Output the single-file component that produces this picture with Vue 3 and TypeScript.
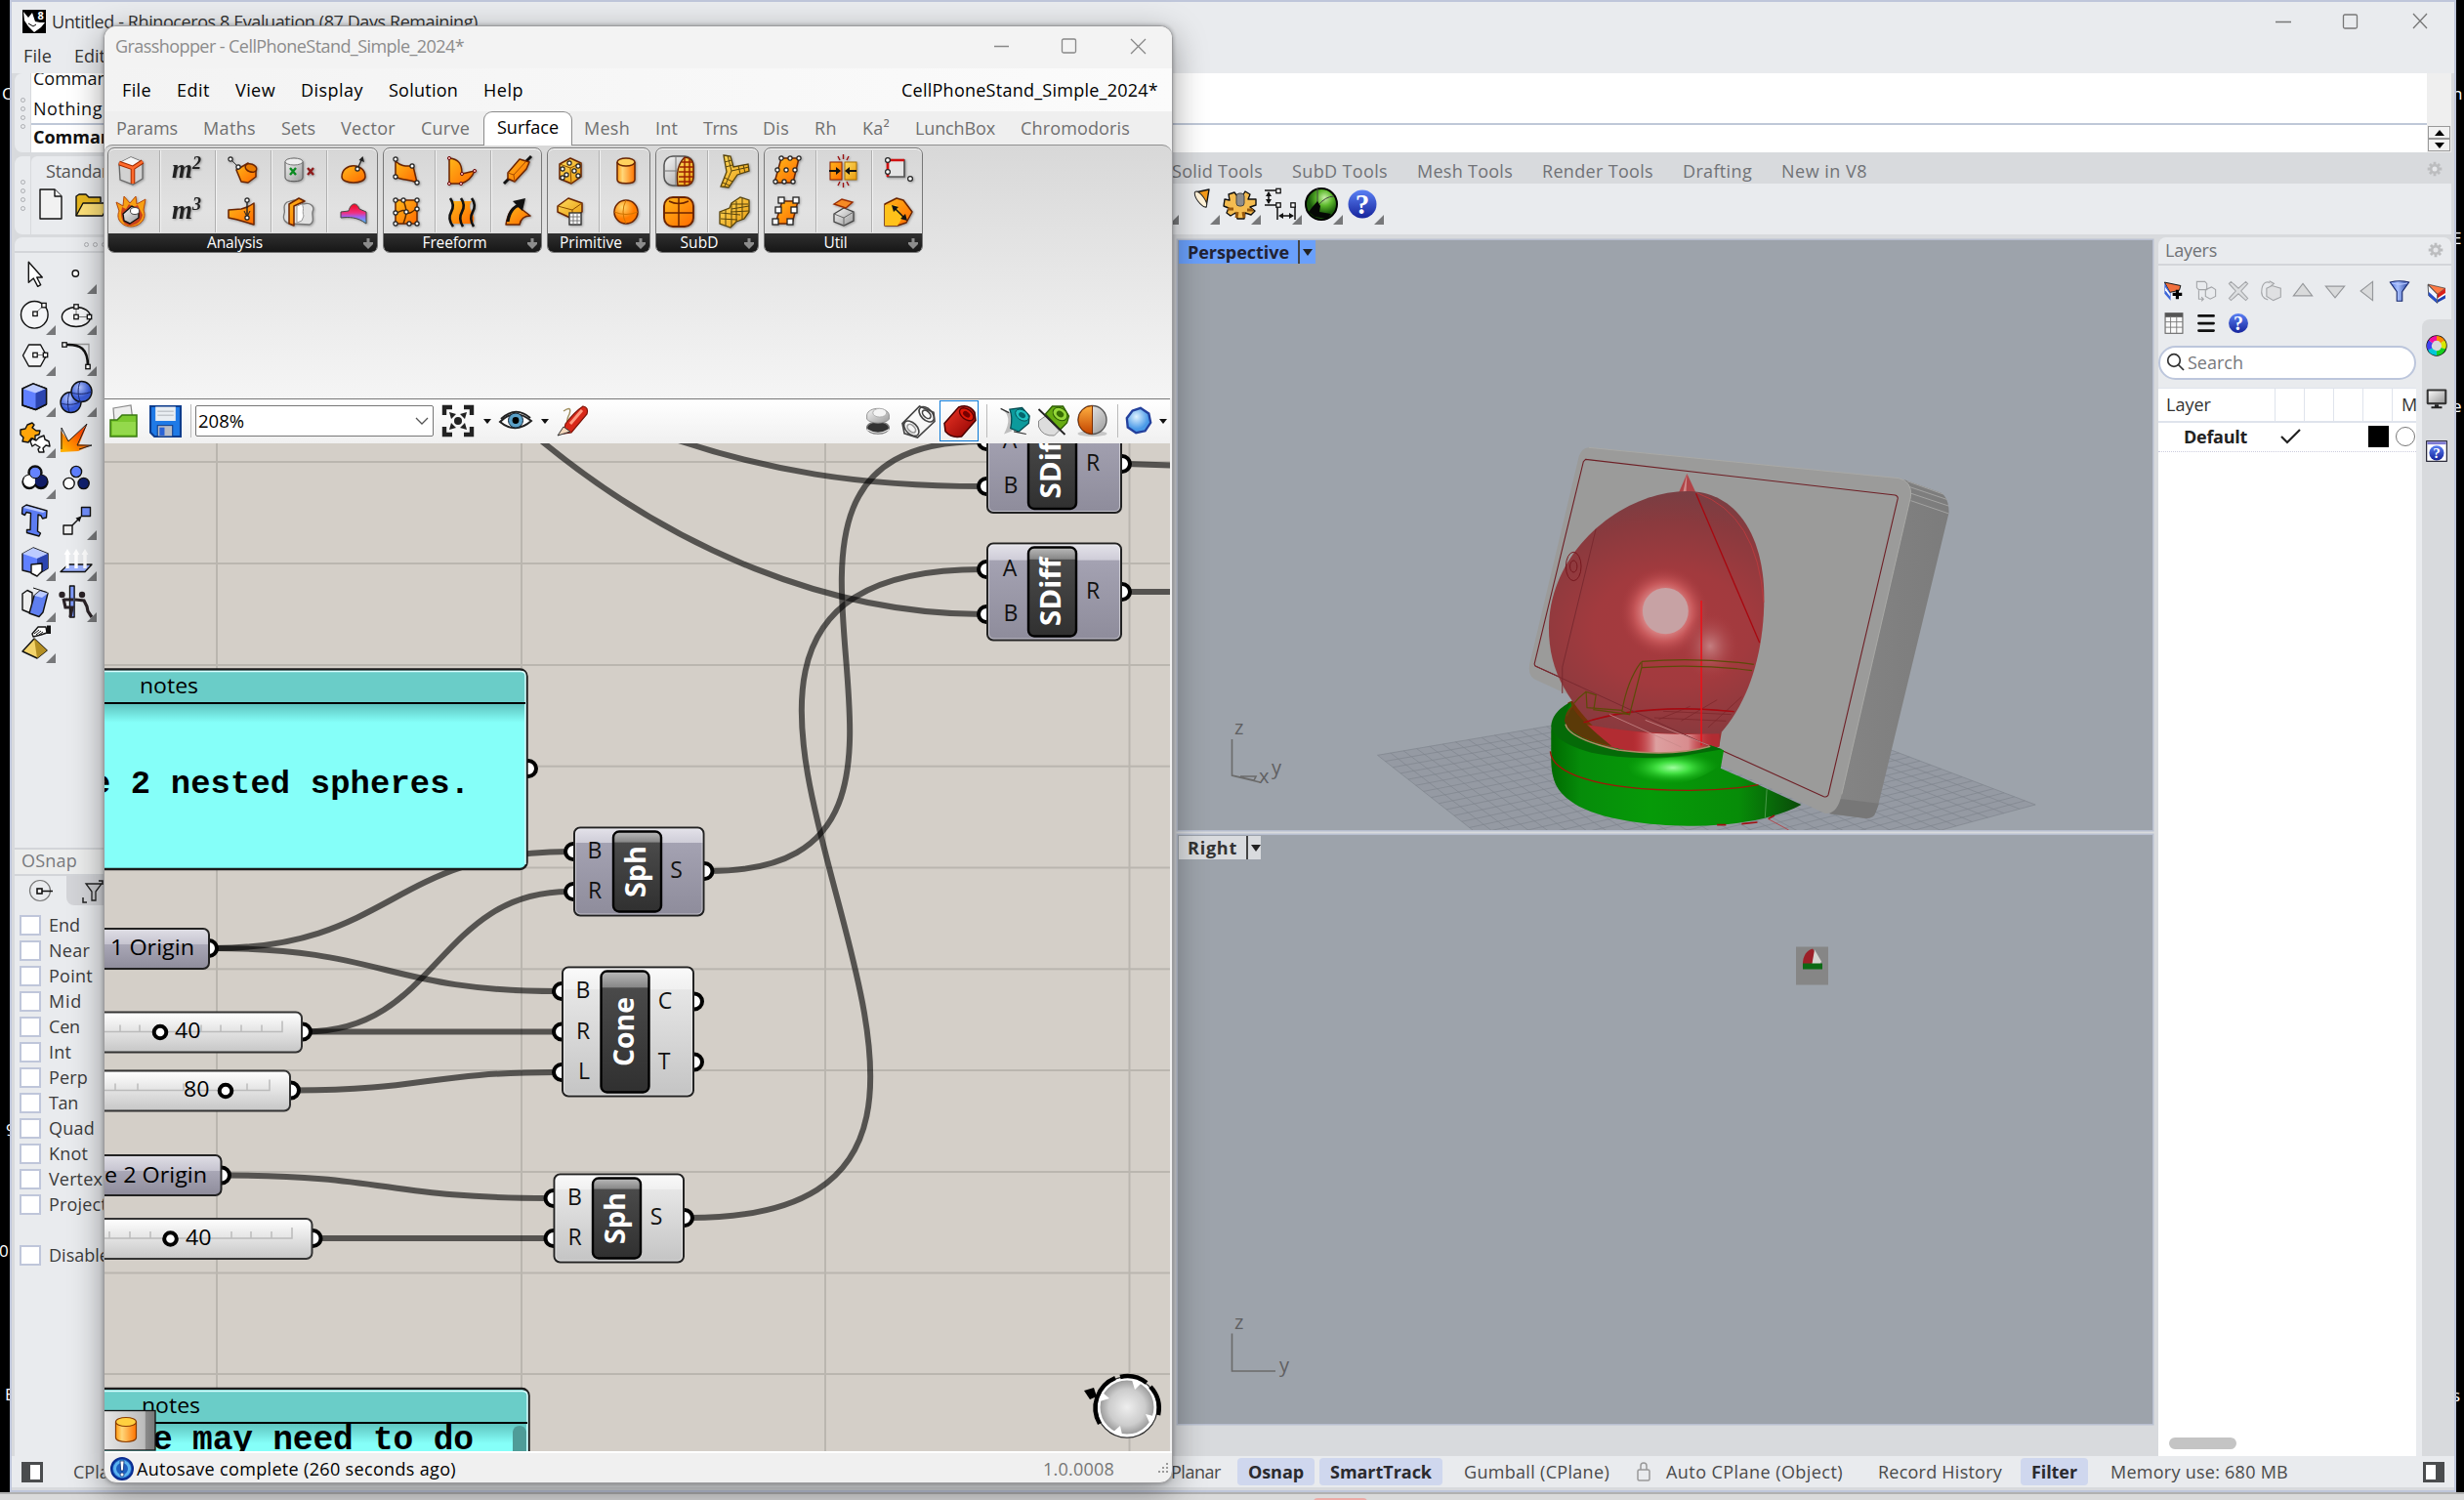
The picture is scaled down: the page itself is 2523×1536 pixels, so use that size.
<script setup lang="ts">
import type { Directive } from 'vue'

/* Sets tracking so that a label occupies exactly the given number of pixels. */
const vFit: Directive<HTMLElement, number> = {
  mounted(el, binding) {
    const range = document.createRange()
    range.selectNodeContents(el)
    const natural = range.getBoundingClientRect().width
    const count = Math.max((el.textContent ?? '').trim().length, 1)
    el.style.letterSpacing = `${(binding.value - natural) / count}px`
    el.style.width = `${binding.value}px`
  },
}

type Label = [text: string, width: number]

const menu: Label[] = [['File', 30], ['Edit', 34], ['View', 41], ['Display', 64], ['Solution', 71], ['Help', 41]]
const tabs: Label[] = [
  ['Params', 63], ['Maths', 54], ['Sets', 35], ['Vector', 56], ['Curve', 50], ['Surface', 63], ['Mesh', 47],
  ['Int', 23], ['Trns', 35], ['Dis', 27], ['Rh', 23], ['Ka²', 28], ['LunchBox', 82], ['Chromodoris', 112],
]
const rhinoTabs: Label[] = [
  ['Solid Tools', 93], ['SubD Tools', 98], ['Mesh Tools', 98], ['Render Tools', 114], ['Drafting', 71], ['New in V8', 88],
]
const snaps: Label[] = [
  ['End', 32], ['Near', 42], ['Point', 45], ['Mid', 34], ['Cen', 32], ['Int', 23], ['Perp', 40], ['Tan', 30],
  ['Quad', 47], ['Knot', 40], ['Vertex', 55], ['Project', 60],
]

interface StatusItem { text: string; width: number; gap: number; on?: boolean }
const status: StatusItem[] = [
  { text: 'Osnap', width: 57, gap: 17, on: true },
  { text: 'SmartTrack', width: 104, gap: 5, on: true },
  { text: 'Gumball (CPlane)', width: 149, gap: 22 },
  { text: 'lock', width: 14, gap: 28 },
  { text: 'Auto CPlane (Object)', width: 181, gap: 16 },
  { text: 'Record History', width: 127, gap: 36 },
  { text: 'Filter', width: 47, gap: 19, on: true },
  { text: 'Memory use: 680 MB', width: 182, gap: 23 },
]

const K = 'stroke="#111" stroke-width="1.4" stroke-linejoin="round"'
const O = 'stroke="#6b2400" stroke-width="1.5" stroke-linejoin="round"'
const sq = (x: number, y: number) => `<rect x="${x - 2.2}" y="${y - 2.2}" width="4.4" height="4.4" fill="#fff" stroke="#111" stroke-width="1.3"/>`
const dot = (x: number, y: number, r = 2.1) => `<circle cx="${x}" cy="${y}" r="${r}" fill="#fff" stroke="#222" stroke-width="1.2"/>`
const HELP = '<circle cx="16" cy="16" r="14.5" fill="url(#helpblue)"/><text x="16" y="26" font-family="Liberation Serif, serif" font-weight="700" font-size="29" fill="#fff" text-anchor="middle">?</text>'

/* Rhino side toolbar, two columns, 32 unit boxes */
const tools: { art: string; fly: boolean }[] = [
  { fly: false, art: `<path d="M9.3 4.3V25.3L14.3 21L18.7 29.3L21.7 27.7L17.7 20H23.3Z" fill="#fff" ${K}/>` },
  { fly: true, art: `<circle cx="15.3" cy="16" r="3.2" fill="#fff" ${K}/>` },
  { fly: true, art: `<circle cx="15.3" cy="16.3" r="13.8" fill="#f4f5f7" ${K}/><path d="M16 15L25 6.5" stroke="#777"/>${sq(16, 15.3)}${sq(25, 6.6)}` },
  { fly: true, art: `<ellipse cx="16" cy="18.5" rx="14.6" ry="10" fill="#f4f5f7" ${K}/><path d="M16 8V18.5H29" stroke="#777" fill="none"/>${sq(16, 8)}${sq(16, 18.5)}${sq(29.5, 18.5)}` },
  { fly: true, art: `<path d="M9.5 5H21.5L27.5 16L21.5 27H9.5L3.5 16Z" fill="#f4f5f7" ${K}/><path d="M16 15.5H27" stroke="#777"/>${sq(16, 15.5)}${sq(26.5, 15.5)}` },
  { fly: true, art: `<path d="M5 4.5H29V27" fill="none" stroke="#999" stroke-width="1.3"/><path d="M6 5C20 4.5 28 9 28 27" fill="none" stroke="#111" stroke-width="2.6"/>${sq(4, 5)}${sq(28, 27.5)}` },
  { fly: true, art: `<path d="M3 8L14 2.8L27.5 8V24L16.5 29.5L3 25Z" fill="#6080ff" ${K}/><path d="M3 8L14 2.8L27.5 8L16.5 12.5Z" fill="#bccbff"/><path d="M16.5 12.5L27.5 8V24L16.5 29.5Z" fill="#2c45b0"/><path d="M3 8L14 2.8L27.5 8V24L16.5 29.5L3 25Z" fill="none" ${K}/>` },
  { fly: true, art: `<circle cx="10.5" cy="22" r="10.5" fill="url(#ballblue)" ${K}/><circle cx="21.5" cy="11" r="10.5" fill="url(#ballblue)" ${K}/><path d="M11.5 12C16 14 26 14 31.5 11M20 1C17 8 18 16 20 21M0.5 23C6 25 15 25 21 21M9 12C7 18 7 27 9 32" fill="none" stroke="#1c2a70"/>` },
  { fly: true, art: `<path d="M1 8L6 7L8 3L13 1L15 3L13 6L17 9L21 9L20 13L16 14L16 18L12 17L9 21L3 20L4 16L1 13Z" fill="#ffa50a" ${K}/><path d="M13 17L17 19L20 16L25 14L26 18L30 20L31 25L27 24L24 27L25 31L20 31L19 28L21 26L16 23L13 25L11 20Z" fill="#fff" ${K}/>` },
  { fly: false, art: `<path d="M0 31V9L8 19L27 3L19 23L31 24L18 30Z" fill="url(#boom)"/><path d="M1 28V6L8 20L27 2L17 24L32 24L19 28" fill="none" stroke="#222"/>` },
  { fly: true, art: `<g ${K} stroke-width="6"><circle cx="16" cy="10" r="7"/><circle cx="10" cy="19.5" r="7"/><circle cx="22" cy="19.5" r="7"/></g><circle cx="10.2" cy="18.6" r="6.2" fill="#fff"/><circle cx="22" cy="18.6" r="6.2" fill="#101c66"/><circle cx="16" cy="10" r="5.8" fill="#6583ff" stroke="#111"/>` },
  { fly: false, art: `<g ${K}><circle cx="16" cy="9" r="5.6" fill="#5f80ff"/><circle cx="8.6" cy="21" r="5.6" fill="#fff"/><circle cx="23.6" cy="21" r="5.6" fill="#10206e"/></g>` },
  { fly: false, art: `<path d="M3 3.5L7 1L28 7L27.5 14L23.5 15L22 12L19 11L18.5 28L21.5 30L20 33L7.5 29.5V26.5L11 26.5L11.5 9.5L7 8.5L5.500 11.500L2.500 10Z" fill="#5c7cf2" ${K}/><path d="M4 4L7 2L27 7.500L24 9Z" fill="#b9c8ff"/>` },
  { fly: true, art: `<path d="M12 22L21 13" stroke="#111" stroke-width="1.5"/><path d="M21.500 12.500L15.500 14.500L19.500 18.500Z" fill="#111"/><rect x="3" y="22" width="9" height="9" fill="#eee" ${K}/><rect x="21.500" y="3.500" width="9" height="9" fill="#7290ff" ${K}/>` },
  { fly: true, art: `<path d="M3 9L14 3L29 9L29 24L19 30L3 26Z" fill="#6080ff" ${K}/><path d="M3 9L14 3L29 9L18 14Z" fill="#bccbff"/><path d="M18 14L29 9V24L18 30Z" fill="#2c45b0"/><path d="M12 20L23 19V27L18 32L12 29Z" fill="#fff" ${K}/>` },
  { fly: true, art: `<path d="M0 27.500L8 20H32L25 27.500Z" fill="#9db2ff" ${K} stroke-width="2"/><path d="M7 24V8M16 24V8M25 24V8" stroke="#fff" stroke-width="3.400"/><path d="M3.500 10L7 4L10.500 10ZM12.500 10L16 4L19.500 10ZM21.500 10L25 4L28.500 10Z" fill="#fff"/>` },
  { fly: true, art: `<path d="M3 8L8 4.500L13 7V27L9 27L3 24.500Z" fill="#eee" ${K}/><path d="M14 2L28 6.500" stroke="#111"/><path d="M15 10L21 5L29 7.500L24 27L20 31.500L10 28Z" fill="#5f7ff0" ${K}/><path d="M15 10L21 5L29 7.500L23 12Z" fill="#bccbff"/>` },
  { fly: true, art: `<rect x="9.500" y="0" width="4.600" height="32" fill="#7f9bff" ${K}/><g fill="none" stroke="#2a2226" stroke-width="3.200"><path d="M3 13L5 22L12 22L10 32M3 14H13M15 14L24 15L27 21L28 26L32 32"/></g><circle cx="1.500" cy="9" r="3.200" fill="#2a2226"/><circle cx="22" cy="9" r="3.200" fill="#2a2226"/>` },
  { fly: true, art: `<path d="M13 7L19 0L27 0L28 6L22 8L14 10Z" fill="#fff" ${K}/><path d="M15 7L20 3M17 8L22 4M20 8L24 5" stroke="#111"/><path d="M28 -1.500H32V7H28Z" fill="#111"/><path d="M3 25L15 12L28 24L18 32Z" fill="#f3d36a" ${K}/><path d="M15 12L18 32L28 24Z" fill="#b48f24"/>` },
]

/* Component palette, 28 unit boxes, ordered row by row */
const cyl = (a: string, b: string, t = '') => `<g ${t}><path d="M5 5V23C5 28 23 28 23 23V5" fill="${a}" ${O}/><ellipse cx="14" cy="5" rx="9" ry="4" fill="${b}" ${O}/></g>`
const groups: { name: string; width: number; label: number; icons: string[] }[] = [
  { name: 'Analysis', width: 277, label: 57, icons: [
    `<path d="M2 6L14 0L26 5V22L16 28L3 23Z" fill="#d2d2d2" stroke="#666" stroke-width="1.300"/><path d="M2 6L14 0L26 5L16 11Z" fill="#f6f6f6"/><path d="M2 6L16 11L26 4.500M16 11V27" fill="none" stroke="#a22c00" stroke-width="4.600"/><path d="M2 6L16 11L26 4.500M16 11V27" fill="none" stroke="#ff6a2c" stroke-width="2.600"/>`,
    `<text x="-1" y="21" font-family="Liberation Serif, serif" font-style="italic" font-weight="700" font-size="27" fill="#222">m</text><text x="20" y="12" font-family="Liberation Serif, serif" font-style="italic" font-weight="700" font-size="18" fill="#222">2</text>`,
    `<path d="M8 13L20 6L28 12V20L20 26L13 25Z" fill="url(#or)" ${O}/><ellipse cx="23" cy="11" rx="6" ry="4" fill="#e87a00" ${O} transform="rotate(20 23 11)"/><path d="M3 3L10 10" stroke="#333"/>${dot(2, 2)}${dot(10, 10)}`,
    `<path d="M1 5V21C1 26 19 26 19 21V5C19 0 1 0 1 5Z" fill="url(#gr)" stroke="#555"/><ellipse cx="10" cy="4.500" rx="9" ry="3.500" fill="#eee" stroke="#777"/><path d="M6 11L12 18M12 11L6 18" stroke="#0a8a20" stroke-width="2.400"/><path d="M24 11L30 18M30 11L24 18" stroke="#8e1a1a" stroke-width="2.400"/>`,
    `<path d="M2 20C2 5 26 5 26 20C26 28 2 28 2 20Z" fill="url(#or)" ${O}/><path d="M18 12L23 1" stroke="#222" stroke-width="1.300"/><path d="M23.500-1L25 5L19.500 3Z" fill="#222"/>${dot(18, 12)}`,
    `<path d="M2 13L-1 4L6 8L7-2L13 5L19-2L20 6L29 1L27 12C31 22 22 29 14 29S-2 22 2 13Z" fill="#f7a014" stroke="#b8480a"/><path d="M4 15L5 9L9 11L12 6L16 9L21 7L23 11L26 17C25 24 20 27 14 28S4 23 4 15Z" fill="#c8401c"/><path d="M6 16L15 8L22 12L22 20L13 26L7 23Z" fill="url(#gr)" ${K}/><ellipse cx="18" cy="13" rx="4.500" ry="3.500" fill="#fff" stroke="#444"/>`,
    `<text x="-1" y="21" font-family="Liberation Serif, serif" font-style="italic" font-weight="700" font-size="27" fill="#222">m</text><text x="20" y="12" font-family="Liberation Serif, serif" font-style="italic" font-weight="700" font-size="18" fill="#222">3</text>`,
    `<path d="M0 12L13 11C18 10 22 8 26 5V27C18 25 12 22 0 20Z" fill="url(#or)" ${O}/><path d="M19 1V20" stroke="#222" stroke-width="1.400"/><path d="M16 13L19 19L22 13" fill="none" stroke="#222"/>${dot(19, 2)}${dot(19, 20)}`,
    `<path d="M3 4C-3 8 2 12 0 16C-2 22 2 26 7 26L26 27C32 24 28 18 29 14C32 8 26 4 20 6L10 2Z" fill="#e2e2e2" stroke="#777" stroke-width="1.300"/><path d="M5 6L15 0L21 3L10 8V28L5 26Z" fill="url(#or)" ${O}/><path d="M13 8L18 6C21 10 18 14 20 18L18 23L13 25Z" fill="#fff" stroke="#999"/>`,
    `<path d="M1 14L9 13C11 5 17 3 20 11L27 14V26C18 19 9 19 1 20Z" fill="url(#heat)" stroke="#444"/>`,
  ] },
  { name: 'Freeform', width: 163, label: 66, icons: [
    `<path d="M3 4C9 10 14 9 21 9L25 26C16 22 10 24 3 20Z" fill="url(#or)" ${O}/>${dot(3, 2)}${dot(20, 9)}${dot(3, 20)}${dot(25, 26)}`,
    `<path d="M1 1C11 2 14 7 14 17L27 14Q23 24 13 27H1Z" fill="url(#or)" ${O}/><g fill="#f7b0b0" stroke="#6b1010"><circle cx="1" cy="1" r="1.600"/><circle cx="27" cy="14" r="1.600"/><circle cx="14" cy="17" r="1.600"/><circle cx="1" cy="27" r="1.600"/><circle cx="13" cy="27" r="1.600"/></g>`,
    `<path d="M0 27L28-1" stroke="#111" stroke-width="3"/><path d="M4 16L16 2L26 5L23 12L11 25L4 22Z" fill="url(#or)" ${O}/><path d="M4 16L10 18L11 25M10 18L22 5" fill="none" stroke="#a84a00"/>`,
    `<rect x="3" y="2" width="22" height="24" fill="url(#or)" ${O}/><path d="M3 16Q12 10 14 14T25 10M11 2Q14 10 14 14T11 26" fill="none" stroke="#5b2b00" stroke-width="1.500"/>${dot(3, 2)}${dot(11, 2)}${dot(25, 2)}${dot(3, 15)}${dot(25, 11)}${dot(14, 14)}${dot(3, 26)}${dot(17, 26)}${dot(25, 26)}`,
    `<path d="M2 3Q7 8 3 14T5 26H25Q28 20 24 14T24 3Z" fill="url(#or)"/><g fill="none" stroke="#111" stroke-width="2.600"><path d="M2 0Q7 7 3 14T5 29M13 0Q18 7 14 14T15 29M24 0Q29 7 25 14T26 29"/></g>`,
    `<path d="M2 27C4 15 8 9 14 8L27 18C20 18 17 22 16 27Z" fill="url(#or)" ${O}/><path d="M4 24C6 11 12 8 18 6" fill="none" stroke="#111" stroke-width="3"/><path d="M22 0L19 13L9 3Z" fill="#111"/>`,
  ] },
  { name: 'Primitive', width: 106, label: 64, icons: [
    `<path d="M3 7L14 1L25 6V20L15 27L3 22Z" fill="url(#ye)" ${O}/><path d="M3 7L14 11L25 6M14 11L15 27" stroke="#8a4b00" fill="none"/>${dot(13, 6)}${dot(6, 12)}${dot(10, 18)}${dot(6, 21)}${dot(18, 14)}${dot(22, 19)}${dot(22, 9)}`,
    cyl('url(#orh)', '#ffd25e'),
    `<path d="M1 8L12 0L26 5V14L16 21L1 14Z" fill="url(#ye)" ${O}/><path d="M1 8L16 12L26 5M16 12V20" stroke="#8a4b00" fill="none"/><rect x="13" y="15" width="12" height="12" fill="#fff" stroke="#333" stroke-width="1.400"/><path d="M17 15V27M21 15V27M13 19H25M13 23H25" stroke="#777"/>`,
    `<circle cx="14" cy="14" r="12" fill="url(#ball)" ${O}/><path d="M2 14Q14 19 26 14M14 2Q8 14 14 26" fill="none" stroke="#d07400"/>`,
  ] },
  { name: 'SubD', width: 106, label: 39, icons: [
    `<rect x="-1" y="-1" width="30" height="30" rx="9" fill="url(#gr)" stroke="#555" stroke-width="1.500"/><path d="M20 0Q29 1 29 9V20Q29 29 20 29H13Q10 10 20 0Z" fill="url(#ye)" ${O}/><path d="M17 5H28M15 10H29M14 15H29M14 20H29M14 25H27M20 0V28M25 1V27" stroke="#9a2000" stroke-width="1.400"/><path d="M0 14H13M11 0V28" stroke="#777" fill="none"/>`,
    `<path d="M3-2L10-1L13 10L28 7L29 14L17 18L8 31L0 30L6 15Z" fill="url(#ye)" stroke="#57430c" stroke-width="1.300"/><path d="M4 5L11 3M5 10L12 8M4 21L12 25M2 26L9 29M18 9L20 17M23 8L25 16M7-2L11 14L4 30M11 14L29 10" stroke="#57430c" fill="none"/>`,
    `<rect x="-1" y="-1" width="30" height="30" rx="9" fill="url(#or)" stroke="#6b2400" stroke-width="1.900"/><path d="M-1 15H29M14-1V29M4 3Q14 8 24 3" stroke="#6b2400" stroke-width="1.500" fill="none"/>`,
    `<path d="M11 5L20-1L29 2V14L24 21L16 24L10 30L-1 26V14L9 10Z" fill="url(#ye)" stroke="#57430c" stroke-width="1.300"/><path d="M11 6H28M11 11L29 8M0 15L20 17M0 21L17 22M5 12V28M11 6V29M16 3V24M22 0V22M10 14L29 13" stroke="#57430c" fill="none"/>`,
  ] },
  { name: 'Util', width: 163, label: 24, icons: [
    `<path d="M8 1H26L20 26H1Z" fill="url(#or)" ${O}/>${dot(8, 1)}${dot(17, 1)}${dot(26, 1)}${dot(4, 13)}${dot(13, 13)}${dot(22, 13)}${dot(2, 25)}${dot(11, 25)}${dot(20, 25)}`,
    `<rect x="1" y="5" width="12" height="18" fill="url(#or)" stroke="#8a2000"/><rect x="16" y="5" width="12" height="18" fill="url(#ye)" stroke="#aa7000"/><path d="M0 14H8M28 14H20" stroke="#111" stroke-width="2"/><path d="M7 10L12 14L7 18ZM21 10L16 14L21 18Z" fill="#111"/><path d="M14.500-3V2M9-1L11 3M20-1L18 3M14.500 31V26M9 29L11 25M20 29L18 25" stroke="#9a1010" stroke-width="1.400"/>`,
    `<path d="M3 3H20V20H3Z" fill="#e4e4e4" stroke="#555" stroke-width="1.700"/><path d="M3 20V3H20" fill="none" stroke="#d01010" stroke-width="2.700"/>${dot(3, 3, 2.4)}${dot(3, 15, 2.4)}${dot(26, 22, 2.4)}`,
    `<path d="M9 3H25L19 26H2Z" fill="url(#or)" ${O}/>${[[8, 2], [23, 2], [5, 12], [21, 12], [2, 24], [17, 24]].map(([x, y]) => `<rect x="${x - 3}" y="${y - 3}" width="6" height="6" fill="#fff" stroke="#222" stroke-width="1.300"/>`).join('')}`,
    `<path d="M5 16L15 10L25 14V23L15 28L5 24Z" fill="url(#gr)" stroke="#444" stroke-width="1.300"/><path d="M5 16L15 20L25 14M15 20V28" stroke="#666" fill="none"/><path d="M5 6L13 1L24 4L17 10Z" fill="#f58a24" stroke="#9a2c00" stroke-width="1.400"/>`,
    `<path d="M0 6L12 0L19 2L28 14L22 25L13 28H0Z" fill="url(#or)" ${O}/><path d="M0 7L12 7L18 20L13 28H0Z" fill="#ffc21a"/><path d="M9 9L21 21" stroke="#111" stroke-width="1.500"/><path d="M7 7L14 9L9 14ZM23 23L16 21L21 16Z" fill="#111"/>`,
  ] },
]

const glyphs: Record<string, string> = {
  open: `<path d="M4 3L22 0L24 16H5Z" fill="#eee" stroke="#888" stroke-width="1.200"/><path d="M1 15H8L13 10H28V32H1Z" fill="#7bc92f" stroke="#3a7a10" stroke-width="1.500"/><path d="M3 17H27V30H3Z" fill="#94d94c"/>`,
  save: `<path d="M1 1H31V31H5L1 27Z" fill="#1f7ae6" stroke="#0d3c8c" stroke-width="2"/><rect x="6" y="1.500" width="20" height="14" fill="#e9eef2"/><path d="M8 6H24M8 10H24" stroke="#c2c7cc" stroke-width="1.500"/><rect x="8" y="20" width="15" height="11" fill="#b8bcc4" stroke="#0d3c8c"/><rect x="10" y="22" width="5" height="8" fill="#2a63d6"/>`,
  fit: `<g fill="none" stroke="#222" stroke-width="4.400"><path d="M2 10V2H10M22 2H30V10M30 22V30H22M10 30H2V22"/></g><circle cx="16" cy="16" r="4" fill="#222"/><path d="M7 7L14 9L9 14ZM25 7L18 9L23 14ZM7 25L14 23L9 18ZM25 25L18 23L23 18Z" fill="#222"/>`,
  eye: `<path d="M0 17Q15 2 32 16Q16 30 0 17Z" fill="#fff" stroke="#222" stroke-width="2"/><circle cx="16" cy="15.500" r="7.500" fill="#5aa0c8" stroke="#123"/><circle cx="16" cy="15.500" r="3.400" fill="#000"/><path d="M1 14Q16 0 31 13" fill="none" stroke="#222" stroke-width="2"/>`,
  pen: `<path d="M7 6Q16 0 13 9Q9 16 12 21" fill="none" stroke="#a09060" stroke-width="1.500"/><path d="M9 19Q18 7 27 1Q33 2 31 9L15 28L7 29Z" fill="#d82818" stroke="#7c1408" stroke-width="1.200"/><path d="M1 31L7 22L14 27Z" fill="#f4d7bb" stroke="#333"/><path d="M14 19L26 5" stroke="#ff9a80" stroke-width="3"/>`,
  hatch: `<ellipse cx="16" cy="24" rx="13" ry="7" fill="#333" stroke="#777" stroke-width="1.500"/><path d="M3 26Q16 34 29 26" fill="none" stroke="#eee" stroke-width="1.300"/><path d="M3 9V14C8 20 24 20 29 14V9C27-1 5-1 3 9Z" fill="url(#gr)" stroke="#888"/><ellipse cx="18" cy="6.500" rx="8" ry="5" fill="#f4f4f4" stroke="#aaa"/>`,
  wire: `<g fill="none" stroke="#444" stroke-width="1.600"><path d="M0 18L17 1L31 7L32 16L15 32L2 28Z"/><ellipse cx="24" cy="9" rx="9" ry="5.500" transform="rotate(45 24 9)"/><ellipse cx="9" cy="23" rx="9" ry="5.500" transform="rotate(45 9 23)"/><ellipse cx="24" cy="9" rx="5" ry="3" transform="rotate(45 24 9)"/><ellipse cx="9" cy="23" rx="5" ry="3" stroke="#999" transform="rotate(45 9 23)"/></g>`,
  shade: `<path d="M1 18L15 2Q25-2 31 7L32 15L18 31Q8 33 2 26Z" fill="url(#red)" stroke="#4c0000" stroke-width="1.500"/><ellipse cx="23" cy="9" rx="8" ry="5" fill="#e01808" stroke="#5a0000" stroke-width="1.300" transform="rotate(38 23 9)"/><ellipse cx="23" cy="9" rx="4" ry="2.500" fill="#700" transform="rotate(38 23 9)"/>`,
  teal: `<path d="M-4 1Q12 10 0 32L10 28L8 6Z" fill="#888" opacity=".5"/><path d="M7 2L22 0L31 10L30 19L18 29L8 25Q11 12 7 2Z" fill="#0c9a9c" stroke="#054a50" stroke-width="1.500"/><ellipse cx="22" cy="9" rx="9" ry="6" fill="#20c0c0" stroke="#054a50" transform="rotate(35 22 9)"/><ellipse cx="22" cy="9" rx="4.500" ry="3" fill="#04646c" transform="rotate(35 22 9)"/><path d="M-4 1L6 6M12 29L27 32" stroke="#333" stroke-width="1.500"/>`,
  green: `<path d="M1 16L8 11L22 26L17 31Q5 32 1 22Z" fill="#ddd" stroke="#888"/><path d="M8 9L15 1L26 1L32 11L30 18L23 25Z" fill="#67ac12" stroke="#2c5c04" stroke-width="1.300"/><ellipse cx="23" cy="9" rx="8" ry="6" fill="#96d83a" stroke="#2c5c04" transform="rotate(35 23 9)"/><ellipse cx="23" cy="9" rx="4" ry="3" fill="#386e04" transform="rotate(35 23 9)"/><path d="M1 4L28 30" stroke="#222" stroke-width="1.800"/>`,
  half: `<ellipse cx="16" cy="29" rx="15" ry="3" fill="#999" opacity=".5"/><circle cx="16" cy="15" r="14.500" fill="url(#gr)" stroke="#555" stroke-width="1.300"/><path d="M16 .5A14.500 14.500 0 0 0 16 29.500Z" fill="url(#half)" stroke="#7a2c00"/>`,
  gem: `<path d="M9 5L18 2L27 8L29 18L23 27L13 29L4 23L3 13Z" fill="url(#gem)" stroke="#23409c" stroke-width="2.500"/>`,
  newdoc: `<path d="M5 1H20L27 8V31H5Z" fill="#f1f1f1" ${K} stroke-width="1.800"/><path d="M20 1V8H27" fill="#fff" ${K}/>`,
  folder: `<path d="M0 28V8L3 6H10L13 9H25V14" fill="#e8b820" ${K}/><path d="M0 28L7 15H34L27 28Z" fill="#ffe27a" ${K}/>`,
  cone: `<path d="M13 4L27 1L24 19Z" fill="#f59a18" ${K}/><ellipse cx="18.500" cy="11" rx="3.500" ry="9.500" fill="#fff2d8" stroke="#222" transform="rotate(-36 18.500 11)"/>`,
  gear: `<path d="M11 4L14 8H19L22 3L27 6L25 11L33 11V17L27 19L32 23L28 27L22 25L21 31L14 31L12 25L7 28L3 25L5 20L0 18L1 11L6 12L5 6Z" fill="#f4bc50" ${K} stroke-width="2"/><path d="M4 21L10 21M13 30L14 24M21 30L20 24M24 22L30 22" fill="none" stroke="#96580e" stroke-width="3"/><rect x="13" y="5" width="8" height="13" rx="3" fill="#8c8c8c" stroke="#444"/>`,
  dims: `<path d="M0 2H14M0 17H14M4 4V15M13 18V32M31 18V32M16 28H28" stroke="#111" stroke-width="1.500"/><path d="M4 3L1 8H7ZM4 16L1 11H7ZM14 28L19 25V31ZM30 28L25 25V31Z" fill="#111"/>${sq(14, 2.5)}${sq(14, 17)}${sq(29, 17)}`,
  climber: `<circle cx="16" cy="16" r="16" fill="url(#grass)" stroke="#000" stroke-width="2"/><path d="M12 0V14M12 18Q20 8 29 8" stroke="#444" fill="none"/><path d="M6 20L12 13L15 18L14 24L26 26L22 31L9 29L3 24Z" fill="#050805"/>`,
  help: HELP,
  addlayer: `<path d="M2 3L26 9V20L10 29L2 19Z" fill="#f4f6ff"/><path d="M2 3L26 8L24 15L10 18Z" fill="#f2703e" ${K} stroke-width="1"/><path d="M2 4L11 19V30L2 20Z" fill="#3d66d8"/><path d="M3 10L10 20V24L3 15Z" fill="#fff"/><path d="M21 14V28M14 21H28" stroke="#000" stroke-width="4.600"/>`,
  addsub: `<g fill="none" stroke="#a4a6a9" stroke-width="1.600"><path d="M2 2H14L17 5V14H5L2 11Z"/><path d="M15 14L24 10L30 14V24L22 28L15 24ZM5 15V28H12M9 25L12 28L9 31"/></g>`,
  del: `<path d="M2 5L5 2L16 12L27 2L30 5L20 16L30 27L27 30L16 20L5 30L2 27L12 16Z" fill="#dcdee0" stroke="#a4a6a9" stroke-width="1.500"/>`,
  match: `<g fill="#dfe0e2" stroke="#a4a6a9" stroke-width="1.600"><path d="M19 5Q6-2 3 12Q0 26 12 29" fill="none"/><path d="M14 1L21 5L16 9"/><path d="M10 12L18 8L31 12V25L20 30L10 24Z"/></g>`,
  up: `<path d="M16 5L30 23H2Z" fill="#d9dadb" stroke="#96989b" stroke-width="1.700"/>`,
  down: `<path d="M16 26L30 9H2Z" fill="#d9dadb" stroke="#96989b" stroke-width="1.700"/>`,
  left: `<path d="M6 16L24 2V30Z" fill="#d9dadb" stroke="#96989b" stroke-width="1.700"/>`,
  funnel: `<path d="M2 3Q16-1 30 3L20 17V31H12V17Z" fill="url(#fun)" stroke="#15266c" stroke-width="1.600"/><path d="M4 4Q16 8 28 4" stroke="#b9c8ff" fill="none" stroke-width="1.500"/>`,
  grid: `<rect x="3" y="1" width="26" height="30" fill="#fafafa" stroke="#666" stroke-width="1.600"/><rect x="3" y="1" width="26" height="6" fill="#555"/><path d="M11 6V31M20 6V31M3 14H29M3 22H29" stroke="#777" stroke-width="1.300"/>`,
  bars: `<path d="M5 5H27M5 16H27M5 27H27" stroke="#111" stroke-width="4" stroke-linecap="round"/>`,
  layers: `<path d="M3 3L29 8V24L16 31L4 20Z" fill="#fff"/><path d="M3 3L29 9L17 18Z" fill="#ff7a45" stroke="#333"/><path d="M17 18L29 9V16L17 24Z" fill="#d92018"/><path d="M17 26L29 19V24L16 31Z" fill="#1d3fb0"/><path d="M3 4L17 18V31L4 20Z" fill="#f4f6ff" stroke="#111"/><path d="M4 14L16 25V31L4 20Z" fill="#2850c8"/>`,
  wheel: `<circle cx="16" cy="16" r="14" fill="none" stroke="#111" stroke-width="3"/><g fill="none" stroke-width="7"><path d="M16 5A11 11 0 0 1 25 10" stroke="#ff8a00"/><path d="M25 10A11 11 0 0 1 26 20" stroke="#d8e800"/><path d="M26 20A11 11 0 0 1 16 27" stroke="#18d020"/><path d="M16 27A11 11 0 0 1 6 21" stroke="#00c8d8"/><path d="M6 21A11 11 0 0 1 7 10" stroke="#4040f0"/><path d="M7 10A11 11 0 0 1 16 5" stroke="#f010a0"/></g>`,
  screen: `<rect x="1" y="2" width="30" height="23" rx="2" fill="#333"/><rect x="4" y="5" width="24" height="17" fill="url(#gr)"/><path d="M13 25H19V28H24V31H8V28H13Z" fill="#222"/>`,
  helpwin: `<rect x="1" y="1" width="30" height="30" fill="#fff" stroke="#112" stroke-width="1.600"/><rect x="2" y="2" width="28" height="4" fill="#7d7ad4"/><g transform="translate(3.800 6.500) scale(.76)">${HELP}</g>`,
  app: `<rect width="24" height="24" fill="#000"/><path d="M1 2L6 8L10 3L13 12L18 13L23 13L19 18L12 23L6 17L2 11Z" fill="#fff"/><path d="M6 14L11 17L14 15" stroke="#000" fill="none"/>`,
}
const COG = '<path d="M16 3v26M3 16h26M7 7l18 18M25 7L7 25" stroke="#bcbdbf" stroke-width="5"/><circle cx="16" cy="16" r="9" fill="#bcbdbf"/><circle cx="16" cy="16" r="4.500" fill="#e6e7ea"/>'

const layerTools = ['addlayer', 'addsub', 'del', 'match', 'up', 'down', 'left', 'funnel', 'grid', 'bars', 'help']

/* Definition canvas */
interface Port { t: string; x: number; y: number }
interface Node { name: string; x: number; y: number; w: number; h: number; ix: number; ih: number; dark: boolean; len: number; size: number; ins: Port[]; outs: Port[] }
const nodes: Node[] = [
  { name: 'SDiff', x: 1010, y: 425, w: 139, h: 101, ix: 1052, ih: 93, dark: true, len: 70, size: 27, ins: [{ t: 'A', x: 1034, y: 452 }, { t: 'B', x: 1035, y: 498 }], outs: [{ t: 'R', x: 1119, y: 475 }] },
  { name: 'SDiff', x: 1010, y: 555.5, w: 139, h: 101, ix: 1052, ih: 93, dark: true, len: 70, size: 27, ins: [{ t: 'A', x: 1034, y: 583 }, { t: 'B', x: 1035, y: 629 }], outs: [{ t: 'R', x: 1119, y: 606 }] },
  { name: 'Sph', x: 587, y: 846.5, w: 134.5, h: 92, ix: 627, ih: 84, dark: true, len: 53, size: 27, ins: [{ t: 'B', x: 609, y: 872 }, { t: 'R', x: 609, y: 913 }], outs: [{ t: 'S', x: 692.5, y: 892 }] },
  { name: 'Cone', x: 575, y: 989.5, w: 136, h: 134, ix: 614.5, ih: 126, dark: false, len: 71, size: 26, ins: [{ t: 'B', x: 597, y: 1015 }, { t: 'R', x: 597, y: 1056.5 }, { t: 'L', x: 598, y: 1098 }], outs: [{ t: 'C', x: 681, y: 1025.5 }, { t: 'T', x: 680, y: 1087.5 }] },
  { name: 'Sph', x: 566.5, y: 1201.5, w: 134.5, h: 92, ix: 606, ih: 84, dark: false, len: 53, size: 27, ins: [{ t: 'B', x: 588.5, y: 1227 }, { t: 'R', x: 588.5, y: 1268 }], outs: [{ t: 'S', x: 672, y: 1247 }] },
]
const wire = (x0: number, y0: number, x1: number, y1: number, d = (x1 - x0) / 2) => `M${x0} ${y0}C${x0 + d} ${y0} ${x1 - d} ${y1} ${x1} ${y1}`
const wires = [
  wire(218, 971, 583, 872), wire(218, 971, 571, 1015), wire(313, 1056.5, 583, 913), wire(313, 1056.5, 571, 1056.5),
  wire(301, 1116.5, 571, 1098), wire(231, 1203.5, 562, 1227), wire(324, 1268, 562, 1268),
  wire(726, 892, 1006, 452, 316), wire(706, 1247, 1006, 583, 478),
  'M683 447C783 482 880 498 1006 498', 'M555 452C690 563 850 629 1006 629', 'M1154 475L1200 476.5', 'M1154 606H1200',
]
const vLines = [222, 534, 845, 1156.5]
const hLines = [473, 577, 681, 784.7, 888.5, 992.3, 1096, 1200, 1303.5, 1407]

const sliders = [
  { r: 310, y: 1035.5, knob: 164, label: '40', lx: 179, ticks: [123, 143, 206, 226, 247, 268], end: 289 },
  { r: 298, y: 1095.5, knob: 231, label: '80', lx: 188, ticks: [118, 141, 188, 253], end: 276 },
  { r: 320.5, y: 1247, knob: 174.5, label: '40', lx: 190, ticks: [112, 133, 154, 237, 257, 278], end: 299 },
]

/* Ground plane of the perspective view */
type P = [number, number]
const corners: P[] = [[23, 1030], [835, 840], [1490, 1182], [501, 1549]]
const mix = (a: P, b: P, t: number): P => [a[0] + (b[0] - a[0]) * t, a[1] + (b[1] - a[1]) * t]
const seg = (a: P, b: P) => `M${a[0].toFixed(1)} ${a[1].toFixed(1)}L${b[0].toFixed(1)} ${b[1].toFixed(1)}`
let ground = ''
const N = 28
for (let i = 0; i <= N; i++) {
  const t = i / N
  ground += seg(mix(corners[0], corners[1], t), mix(corners[3], corners[2], t))
  ground += seg(mix(corners[0], corners[3], t), mix(corners[1], corners[2], t))
}
</script>

<template>
  <div class="desktop">
    <svg class="defs" aria-hidden="true">
      <defs>
        <linearGradient id="or" x1="0" y1="0" x2="1" y2="1"><stop offset="0" stop-color="#ffb81a" /><stop offset="1" stop-color="#ff6a00" /></linearGradient>
        <linearGradient id="orh"><stop offset="0" stop-color="#ff9a10" /><stop offset=".3" stop-color="#ffd77a" /><stop offset="1" stop-color="#ff7400" /></linearGradient>
        <linearGradient id="ye" x1="0" y1="0" x2="1" y2="1"><stop offset="0" stop-color="#ffdc60" /><stop offset="1" stop-color="#e89a0c" /></linearGradient>
        <linearGradient id="gr" x1="0" y1="0" x2="1" y2="1"><stop offset="0" stop-color="#f8f8f8" /><stop offset="1" stop-color="#9a9a9a" /></linearGradient>
        <linearGradient id="red" x1="0" y1="0" x2="1" y2="1"><stop offset="0" stop-color="#f03828" /><stop offset="1" stop-color="#8c0000" /></linearGradient>
        <linearGradient id="half" x1="0" y1="0" x2="0" y2="1"><stop offset="0" stop-color="#ffb040" /><stop offset="1" stop-color="#c24400" /></linearGradient>
        <linearGradient id="heat" x1="0" y1="0" x2="0" y2="1"><stop offset=".1" stop-color="#f01030" /><stop offset=".45" stop-color="#f03080" /><stop offset=".65" stop-color="#a060f0" /><stop offset="1" stop-color="#40d0f8" /></linearGradient>
        <linearGradient id="boom" x1="0" y1="1" x2="1" y2="0"><stop offset=".1" stop-color="#ffb000" /><stop offset=".7" stop-color="#ff4a00" /></linearGradient>
        <linearGradient id="helpblue" x1="0" y1="0" x2="0" y2="1"><stop offset="0" stop-color="#5a80f4" /><stop offset="1" stop-color="#16249c" /></linearGradient>
        <linearGradient id="fun"><stop offset="0" stop-color="#4a70dc" /><stop offset=".4" stop-color="#a8c0ff" /><stop offset="1" stop-color="#22409c" /></linearGradient>
        <radialGradient id="ball" cx=".35" cy=".3"><stop offset="0" stop-color="#ffdc70" /><stop offset="1" stop-color="#ff7c00" /></radialGradient>
        <radialGradient id="ballblue" cx=".4" cy=".3"><stop offset="0" stop-color="#b4c6ff" /><stop offset="1" stop-color="#3a5cd8" /></radialGradient>
        <radialGradient id="grass" cx=".6" cy=".3"><stop offset="0" stop-color="#c8f0a8" /><stop offset=".5" stop-color="#5cb82c" /><stop offset="1" stop-color="#1c5c0c" /></radialGradient>
        <radialGradient id="gem" cx=".4" cy=".35"><stop offset="0" stop-color="#dff2ff" /><stop offset="1" stop-color="#4a9ae8" /></radialGradient>
      </defs>
    </svg>

    <!-- Rhino main window -->
    <div class="rhino">
      <header class="title">
        <svg class="appicon" viewBox="0 0 24 24"><g v-html="glyphs.app" /><text x="15.500" y="10" font-family="Open Sans, sans-serif" font-size="11" font-weight="700" fill="#fff">8</text></svg>
        <span v-fit="436" class="t">Untitled - Rhinoceros 8 Evaluation (87 Days Remaining)</span>
        <svg class="winbtns" width="160" height="20" viewBox="0 0 160 20" fill="none" stroke="#777" stroke-width="1.300"><path d="M10 10.500H26M151 2L165 17M165 2L151 17" /><rect x="79.500" y="3" width="14" height="14" rx="1.500" /></svg>
      </header>
      <nav class="rmenu"><span v-fit="29" class="t">File</span><span v-fit="32" class="t">Edit</span></nav>

      <section class="cmd">
        <div class="grip cgrip"><i v-for="n in 4" :key="n" /></div>
        <div class="cmdbody">
          <div class="hist"><span class="t">Command</span><span v-fit="71" class="t">Nothing</span></div>
          <div class="prompt"><b class="t">Command</b></div>
        </div>
        <div class="cmdscroll"><div class="spin"><i class="su" /></div><div class="spin"><i class="sd" /></div></div>
      </section>

      <section class="bars">
        <div class="grip bgrip"><i v-for="n in 4" :key="n" /></div>
        <div class="barcol">
          <div class="strip">
            <span class="std"><span v-fit="75" class="t">Standard</span></span>
            <span class="more"><span v-for="[t, w] in rhinoTabs" :key="t" v-fit="w" class="t">{{ t }}</span></span>
            <svg class="cog" viewBox="0 0 32 32" v-html="COG" />
          </div>
          <div class="btns">
            <span v-for="g in ['newdoc', 'folder']" :key="g" class="cell"><svg viewBox="0 0 32 32" v-html="glyphs[g]" /></span>
            <span class="gapcell"><i class="fly" /></span>
            <span v-for="g in ['cone', 'gear', 'dims', 'climber', 'help']" :key="g" class="cell"><svg viewBox="0 0 32 32" v-html="glyphs[g]" /><i class="fly" /></span>
          </div>
        </div>
      </section>

      <main class="work">
        <aside class="side">
          <div class="sidetop"><i v-for="n in 3" :key="n" /></div>
          <div class="tools">
            <span v-for="(tool, i) in tools" :key="i" class="cell"><svg viewBox="0 0 32 32" v-html="tool.art" /><i v-if="tool.fly" class="fly" /></span>
          </div>
          <div class="oshead"><span v-fit="57" class="t">OSnap</span></div>
          <div class="ostabs">
            <svg class="ostab" viewBox="0 0 53 30"><circle cx="26" cy="15" r="10.500" fill="none" stroke="#777" stroke-width="1.200" /><path d="M28 15.500H39" stroke="#111" stroke-width="1.500" /><rect x="23" y="13" width="5" height="5" fill="#fff" stroke="#111" stroke-width="1.600" /></svg>
            <span class="ostab2"><svg width="24" height="24" viewBox="0 0 24 24"><path d="M3 4H19L13 12V21H9V12Z" fill="#c8c9cc" stroke="#222" stroke-width="1.300" /><path d="M0 18V23H4M16 1H20V5" fill="none" stroke="#222" stroke-width="1.500" /></svg></span>
          </div>
          <div class="snaps">
            <label v-for="[t, w] in snaps" :key="t"><i /><span v-fit="w" class="t">{{ t }}</span></label>
            <label class="last"><i /><span v-fit="62" class="t">Disable</span></label>
          </div>
        </aside>

        <div class="views">
          <div class="view persp">
            <svg class="scene" viewBox="1206 246 998 604">
              <defs>
                <radialGradient id="egg" gradientUnits="userSpaceOnUse" cx="680" cy="640" r="440"><stop offset="0" stop-color="#a73a3e" /><stop offset=".4" stop-color="#a23a3e" /><stop offset=".75" stop-color="#8a3a3e" /><stop offset="1" stop-color="#753f44" /></radialGradient>
                <radialGradient id="glow"><stop offset=".4" stop-color="#e09494" /><stop offset=".65" stop-color="#cc5c5e" stop-opacity=".85" /><stop offset="1" stop-color="#a83a3e" stop-opacity="0" /></radialGradient>
                <radialGradient id="glow2"><stop offset="0" stop-color="#c47e80" /><stop offset="1" stop-color="#a83a3e" stop-opacity="0" /></radialGradient>
                <linearGradient id="glare"><stop offset="0" stop-color="#c83038" stop-opacity="0" /><stop offset=".3" stop-color="#dda0a0" /><stop offset=".7" stop-color="#d88c8e" /><stop offset="1" stop-color="#c83038" stop-opacity="0" /></linearGradient>
                <linearGradient id="ring"><stop offset="0" stop-color="#006a00" /><stop offset=".12" stop-color="#068c0a" /><stop offset=".4" stop-color="#069a08" /><stop offset=".75" stop-color="#078c08" /><stop offset="1" stop-color="#0a4a0a" /></linearGradient>
                <radialGradient id="shine"><stop offset="0" stop-color="#a0ffa0" /><stop offset=".35" stop-color="#48e848" stop-opacity=".9" /><stop offset="1" stop-color="#08a008" stop-opacity="0" /></radialGradient>
                <linearGradient id="inner"><stop offset="0" stop-color="#6e3008" /><stop offset=".25" stop-color="#7a3808" /><stop offset=".3" stop-color="#983030" /><stop offset="1" stop-color="#983030" /></linearGradient>
                <linearGradient id="edge"><stop offset="0" stop-color="#858585" /><stop offset="1" stop-color="#7c7c7c" /></linearGradient>
              </defs>
              <g transform="translate(1400 430) scale(.45918 .33333)">
                <path d="M23 1030L835 840L1490 1182L501 1549Z" fill="#959aa3" />
                <path :d="ground" class="ln" stroke="#7f858e" stroke-width=".7" />
                <path d="M1195 182L1280 224Q1297 240 1297 285L1140 1180Q1132 1222 1112 1224L1030 1210L1050 1160L1205 250Z" fill="url(#edge)" />
                <path d="M1204 188L1284 228M1208 205L1292 244M1211 225L1296 264M1212 248L1297 288" class="ln" stroke="#a3a3a2" />
                <path d="M1055 1164L1141 1178L1134 1205Q1130 1224 1112 1224L1032 1210Z" fill="#777" />
                <path d="M494 85L1185 179Q1215 188 1212 235L1058 1150Q1048 1215 1020 1208L372 796Q358 782 362 750L472 112Q478 86 494 85Z" fill="#9b9b9a" />
                <path d="M494 85L1185 179Q1215 188 1212 235L1058 1150" class="ln" stroke="#a9a9a6" />
                <path d="M487 121L1177 231Q1184 234 1183 242L1028 1152Q1025 1160 1018 1157L376 757Q372 754 373 748L482 128Z" class="ln" stroke="#6e2026" stroke-width="1.100" />
                <path d="M448 868Q438 900 440 930Q450 990 600 1020Q700 1034 785 1002L790 960L600 900L480 850Z" fill="url(#inner)" />
                <path d="M713 165L695 222Q714 228 733 224Z" fill="#b04448" /><path d="M713 165L704 224H711Z" fill="#d08a8a" />
                <path d="M713 219C830 219 885 370 885 545C885 740 840 905 762 998Q700 1030 560 1016C450 880 405 780 405 640C405 400 570 219 713 219Z" fill="url(#egg)" />
                <ellipse cx="662" cy="590" rx="100" ry="140" fill="url(#glow)" />
                <ellipse cx="765" cy="695" rx="65" ry="105" fill="url(#glow2)" />
                <ellipse cx="665" cy="587" rx="51" ry="71" fill="#c7a2a4" />
                <path d="M485 935Q620 970 785 964V1004Q700 1030 600 1022Q565 1015 545 1003Z" fill="#b22c32" /><path d="M590 958Q690 970 770 964V1010Q700 1030 590 1020Z" fill="url(#glare)" />
                <path d="M485 928Q640 870 818 896M760 945L835 850M700 925L780 860M650 920L720 880M640 915L800 925M660 895L812 905" class="ln" stroke="#6e1c20" stroke-width=".8" opacity=".6" />
                <path d="M454 866C422 895 411 920 410 955V1050C412 1120 428 1152 472 1187C540 1235 650 1247 730 1247C830 1245 910 1225 968 1182L870 1120L788 1070L795 1015L765 1000C720 1026 640 1030 590 1018C500 1000 444 960 440 925Q440 900 456 880Z" fill="url(#ring)" />
                <path d="M410 940Q415 990 500 1022Q600 1050 720 1028Q770 1018 792 1012L765 1000C720 1024 640 1030 590 1018C500 1000 444 960 440 925Q440 900 454 870L446 872Q412 900 410 940Z" fill="#056a08" />
                <path d="M440 925Q446 900 458 885Q480 930 545 1002Q450 970 440 925Z" fill="#5b3a08" />
                <path d="M442 935Q450 980 560 1014Q680 1036 765 1003" class="ln" stroke="#b08a68" stroke-width="1.600" />
                <path d="M575 1040Q680 1046 780 1018L788 1060Q690 1160 590 1090Z" fill="url(#shine)" />
                <path d="M408 1018C412 1080 500 1139 720 1138Q800 1138 872 1121" class="ln" stroke="#9c1a08" stroke-width="1.300" />
                <path d="M891 1135L887 1222" class="ln" stroke="#4a9a4a" />
                <path d="M733 226L875 685M482 930Q620 868 818 896" class="ln" stroke="#a80810" stroke-width="1.300" />
                <path d="M735 224Q870 290 884 560" class="ln" stroke="#b83a3e" />
                <path d="M745 555V1000" class="ln" stroke="#ee1018" stroke-width="1.500" />
                <ellipse cx="460" cy="450" rx="17" ry="44" class="ln" stroke="#76181e" /><ellipse cx="460" cy="450" rx="8" ry="18" class="ln" stroke="#76181e" />
                <path d="M510 335L435 760V840M373 755L760 1000" class="ln" stroke="#7a2a30" />
                <path d="M612 742Q740 728 862 751M612 761Q740 748 858 770M612 742L612 760L585 905L568 895Q580 800 610 745M568 892L490 884L488 835L510 845L505 890L585 905M488 835Q455 870 445 910" class="ln" stroke="#5c4a08" stroke-width="1.200" />
                <path d="M540 905L700 1005M620 922L762 1000" class="ln" stroke="#c98a8a" stroke-width=".8" />
                <path d="M893 1225L940 1260" class="ln" stroke="#b04a50" /><path d="M780 1244H800M835 1241L870 1236M895 1225L908 1215" class="ln" stroke="#a01010" stroke-width="1.600" />
              </g>
              <g fill="none" stroke="#6b6b6b" stroke-width="1.600"><path d="M1261.500 757V794L1290 801M1261.500 794L1284 799L1286 795H1270" /></g>
              <g class="axis"><text x="1264" y="752">z</text><text x="1289" y="802">x</text><text x="1302" y="793">y</text></g>
            </svg>
            <div class="vlabel on"><b v-fit="104" class="t">Perspective</b><i /><em /></div>
          </div>
          <div class="view right">
            <svg class="scene" viewBox="1206 856 998 602">
              <rect x="1839" y="970" width="33" height="39" fill="#868686" />
              <path d="M1846 991C1845 976 1853 973 1856 972L1859 976L1857 990Z" fill="#9c2028" /><path d="M1858 973L1865 985L1862 991L1855 990Z" fill="#d5d5d0" /><path d="M1846 987H1866V993H1846Z" fill="#0c6a14" />
              <path d="M1261.500 1366V1404.500H1306" fill="none" stroke="#6b6b6b" stroke-width="1.600" />
              <g class="axis"><text x="1264" y="1361">z</text><text x="1310" y="1405">y</text></g>
            </svg>
            <div class="vlabel"><b v-fit="51" class="t">Right</b><i /><em /></div>
          </div>
        </div>

        <aside class="panel">
          <div class="phead"><span v-fit="53" class="t">Layers</span><svg class="cog" viewBox="0 0 32 32" v-html="COG" /></div>
          <div class="prow">
            <div class="pbody">
              <div class="ptools"><svg v-for="g in layerTools" :key="g" viewBox="0 0 32 32" v-html="glyphs[g]" /></div>
              <div class="search"><svg width="20" height="20" viewBox="0 0 20 20" fill="none" stroke="#333" stroke-width="1.700"><circle cx="8" cy="8" r="6.300" /><path d="M12.500 12.500L18 18" /></svg><span v-fit="57" class="t">Search</span></div>
              <div class="table">
                <div class="thead"><span class="first"><span v-fit="46" class="t">Layer</span></span><span /><span /><span /><span /><span class="m">M</span></div>
                <div class="tr"><b v-fit="65" class="t">Default</b><svg width="22" height="18" viewBox="0 0 22 18" fill="none" stroke="#222" stroke-width="2.200"><path d="M2 9L8 15L21 2" /></svg><i class="sw" /><i class="ring" /></div>
                <div class="thumb" />
              </div>
            </div>
            <div class="ptabs">
              <div class="ptab"><svg viewBox="0 0 32 32" v-html="glyphs.layers" /></div>
              <div class="prest"><svg v-for="g in ['wheel', 'screen', 'helpwin']" :key="g" viewBox="0 0 32 32" v-html="glyphs[g]" /></div>
            </div>
          </div>
        </aside>
      </main>

      <footer class="rstat">
        <i class="dock l" />
        <span v-fit="58" class="t cpl">CPlane</span>
        <span v-fit="51" class="t planar">Planar</span>
        <template v-for="s in status" :key="s.text">
          <svg v-if="s.text === 'lock'" class="lock" :style="{ marginLeft: s.gap + 'px' }" width="14" height="20" viewBox="0 0 14 20" fill="none" stroke="#999" stroke-width="1.500"><rect x="1" y="8" width="12" height="11" rx="1.500" /><path d="M4 8V4Q4 1 7 1T10 4V8" /></svg>
          <span v-else class="st" :class="{ on: s.on }" :style="{ marginLeft: s.gap + 'px' }"><span v-fit="s.width" class="t">{{ s.text }}</span></span>
        </template>
        <i class="dock r" />
      </footer>
    </div>

    <div class="taskbar"><i /></div>
    <div class="edge left"><span>C</span><span>9</span><span>0</span><span>E</span></div>
    <div class="edge rightedge"><span>n</span><span>E</span><span>e</span><span>s</span></div>

    <!-- Grasshopper window -->
    <div class="gh">
      <header class="ghtitle">
        <span v-fit="357" class="t">Grasshopper - CellPhoneStand_Simple_2024*</span>
        <svg width="160" height="20" viewBox="0 0 160 20" fill="none" stroke="#888" stroke-width="1.300"><path d="M3 10.500H18M143 3L158 18M158 3L143 18" /><rect x="72.500" y="3" width="14" height="14" rx="1.500" /></svg>
      </header>
      <nav class="ghmenu">
        <span v-for="[t, w] in menu" :key="t" v-fit="w" class="t">{{ t }}</span>
        <span v-fit="263" class="t doc">CellPhoneStand_Simple_2024*</span>
      </nav>
      <nav class="ghtabs">
        <span v-for="[t, w] in tabs" :key="t" class="gt" :class="{ on: t === 'Surface' }"><span v-fit="w" class="t">{{ t }}</span></span>
      </nav>
      <section class="ribbon">
        <div v-for="g in groups" :key="g.name" class="grp" :style="{ width: g.width + 'px' }">
          <div class="gi" :style="{ gridTemplateColumns: `repeat(${g.icons.length / 2}, 57px)` }">
            <span v-for="(ic, i) in g.icons" :key="i" :class="{ div: i % (g.icons.length / 2) > 0 }"><svg viewBox="0 0 28 28" v-html="ic" /></span>
          </div>
          <div class="gl"><span v-fit="g.label" class="t">{{ g.name }}</span><svg width="12" height="13" viewBox="0 0 12 13"><path d="M4.500 1H7.500V5H11V7L6 12L1 7V5H4.500Z" fill="#8c8c8c" /></svg></div>
        </div>
      </section>
      <section class="ghbar">
        <svg class="g1" viewBox="0 0 29 33" v-html="glyphs.open" />
        <svg class="g2" viewBox="0 0 32 32" v-html="glyphs.save" />
        <i class="vsep" />
        <div class="combo"><span v-fit="47" class="t">208%</span><svg width="14" height="8" viewBox="0 0 14 8" fill="none" stroke="#555" stroke-width="1.300"><path d="M1 1L7 7L13 1" /></svg></div>
        <svg class="g3" viewBox="0 0 32 32" v-html="glyphs.fit" /><i class="dd" />
        <svg class="g3 eye" viewBox="0 0 32 32" v-html="glyphs.eye" /><i class="dd" />
        <svg class="g3 pen" viewBox="0 0 32 32" v-html="glyphs.pen" />
        <span class="grow" />
        <svg class="r1" viewBox="0 0 32 32" v-html="glyphs.hatch" />
        <svg class="r2" viewBox="0 0 32 32" v-html="glyphs.wire" />
        <span class="sel"><svg viewBox="0 0 32 32" v-html="glyphs.shade" /></span>
        <i class="vsep s2" />
        <svg class="r3" viewBox="0 0 32 32" v-html="glyphs.teal" />
        <svg class="r4" viewBox="0 0 32 32" v-html="glyphs.green" />
        <svg class="r4" viewBox="0 0 32 32" v-html="glyphs.half" />
        <i class="vsep s3" />
        <svg class="r5" viewBox="0 0 32 32" v-html="glyphs.gem" /><i class="dd" />
      </section>

      <svg class="canvas" viewBox="107 454 1091 1032">
        <defs>
          <linearGradient id="nd" x1="0" y1="0" x2="0" y2="1"><stop offset="0" stop-color="#e4e3ea" /><stop offset=".17" stop-color="#cfcdd8" /><stop offset=".175" stop-color="#a4a2b2" /><stop offset="1" stop-color="#8e8c9b" /></linearGradient>
          <linearGradient id="nl" x1="0" y1="0" x2="0" y2="1"><stop offset="0" stop-color="#fafafa" /><stop offset=".17" stop-color="#f0f0f0" /><stop offset=".175" stop-color="#e6e6e6" /><stop offset="1" stop-color="#c4c4c4" /></linearGradient>
          <linearGradient id="bk" x1="0" y1="0" x2="0" y2="1"><stop offset="0" stop-color="#bbb" /><stop offset=".13" stop-color="#888" /><stop offset=".14" stop-color="#4a4a4a" /><stop offset="1" stop-color="#303030" /></linearGradient>
          <linearGradient id="od" x1="0" y1="0" x2="0" y2="1"><stop offset="0" stop-color="#e0dfe6" /><stop offset=".39" stop-color="#c6c4d0" /><stop offset=".4" stop-color="#a9a7b6" /><stop offset="1" stop-color="#8e8c9b" /></linearGradient>
          <linearGradient id="sl" x1="0" y1="0" x2="0" y2="1"><stop offset="0" stop-color="#fff" /><stop offset="1" stop-color="#c6c6c6" /></linearGradient>
          <linearGradient id="pn" x1="0" y1="0" x2="0" y2="1"><stop offset="0" stop-color="#5fc4bf" /><stop offset="1" stop-color="#85fff9" /></linearGradient>
          <linearGradient id="bt"><stop offset="0" stop-color="#eee" /><stop offset=".82" stop-color="#bbb" /><stop offset=".83" stop-color="#8a8a8a" /><stop offset="1" stop-color="#777" /></linearGradient>
          <radialGradient id="dial"><stop offset="0" stop-color="#eee" /><stop offset=".6" stop-color="#ccc" /><stop offset="1" stop-color="#8a8a8a" /></radialGradient>
        </defs>
        <rect x="107" y="454" width="1091" height="1032" fill="#d4cfc8" />
        <g fill="#bab6af">
          <rect v-for="x in vLines" :key="x" :x="x - 1" y="454" width="2" height="1032" />
          <rect v-for="y in hLines" :key="y" x="107" :y="y - 1" width="1091" height="2" />
        </g>
        <g fill="none" stroke="#000" stroke-opacity=".6" stroke-width="6"><path v-for="w in wires" :key="w" :d="w" /></g>

        <g v-for="(n, i) in nodes" :key="i">
          <g fill="#fff" stroke="#000" stroke-width="4">
            <circle v-for="p in n.ins" :key="p.t" :cx="n.x" :cy="p.y" r="8" />
            <circle v-for="p in n.outs" :key="p.t" :cx="n.x + n.w" :cy="p.y" r="8" />
          </g>
          <rect :x="n.x + 1" :y="n.y + 1" :width="n.w - 2" :height="n.h - 2" rx="6" :fill="n.dark ? 'url(#nd)' : 'url(#nl)'" stroke="#222" stroke-width="2" />
          <rect :x="n.x + 2.500" :y="n.y + 2.500" :width="n.w - 5" :height="n.h - 5" rx="5" fill="none" stroke="#fff" stroke-opacity=".45" />
          <rect :x="n.ix + 1" :y="n.y + 5" width="49" :height="n.ih - 2" rx="6" fill="url(#bk)" stroke="#000" stroke-width="2.400" />
          <text class="cap" text-anchor="middle" :textLength="n.len" lengthAdjust="spacingAndGlyphs" :font-size="n.size + 2" :transform="`translate(${n.ix + 34} ${n.y + n.h / 2}) rotate(-90)`">{{ n.name }}</text>
          <text v-for="p in [...n.ins, ...n.outs]" :key="p.t + p.x" class="port" text-anchor="middle" :x="p.x" :y="p.y + 7">{{ p.t }}</text>
        </g>

        <!-- point params -->
        <g>
          <circle cx="214" cy="971" r="8" class="pin" /><rect x="90" y="951" width="124" height="41" rx="6" fill="url(#od)" stroke="#222" stroke-width="2" />
          <text class="par" x="113" y="978" textLength="86" lengthAdjust="spacingAndGlyphs">1 Origin</text>
          <circle cx="227" cy="1203.500" r="8" class="pin" /><rect x="90" y="1183" width="136.500" height="41" rx="6" fill="url(#od)" stroke="#222" stroke-width="2" />
          <text class="par" x="107" y="1210.500" textLength="105" lengthAdjust="spacingAndGlyphs">e 2 Origin</text>
        </g>

        <g v-for="s in sliders" :key="s.y">
          <circle :cx="s.r" :cy="s.y + 21" r="8" class="pin" />
          <rect x="90" :y="s.y + 1" :width="s.r - 91" height="41" rx="6" fill="url(#sl)" stroke="#333" stroke-width="2" />
          <path :d="`M107 ${s.y + 21}H${s.end}V${s.y + 10}`" fill="none" stroke="#bbb" stroke-width="1.500" />
          <path v-for="t in s.ticks" :key="t" :d="`M${t} ${s.y + 14}v7`" stroke="#bbb" stroke-width="1.500" />
          <circle :cx="s.knob" :cy="s.y + 21.500" r="6.300" fill="#fff" stroke="#000" stroke-width="4" />
          <text class="par" :x="s.lx" :y="s.y + 27.500" textLength="26.500" lengthAdjust="spacingAndGlyphs">{{ s.label }}</text>
        </g>

        <!-- notes panels -->
        <g>
          <circle cx="541" cy="787" r="8" class="pin" />
          <rect x="90" y="685.500" width="449.500" height="204.500" rx="7" fill="#85fff9" stroke="#1c1c1c" stroke-width="2.400" />
          <path d="M107 687H533Q538 687 538 692V719H107Z" fill="#6acdc8" /><path d="M107 687.500H533Q538 687.500 538 692V885" fill="none" stroke="#d8ffff" stroke-width="1.500" />
          <rect x="107" y="721" width="430" height="19" fill="url(#pn)" /><path d="M107 720H538" stroke="#000" stroke-width="2" />
          <text class="par" x="143" y="709.500" textLength="60" lengthAdjust="spacingAndGlyphs">notes</text>
          <text class="mono" x="93" y="812" font-size="33.800" textLength="388" xml:space="preserve">e 2 nested spheres.</text>
        </g>
        <g>
          <rect x="90" y="1422" width="451.500" height="100" rx="7" fill="#85fff9" stroke="#1c1c1c" stroke-width="2.400" />
          <path d="M107 1424H535Q540 1424 540 1429V1456H107Z" fill="#6acdc8" /><path d="M107 1424.500H535Q540 1424.500 540 1429V1486" fill="none" stroke="#d8ffff" stroke-width="1.500" />
          <rect x="107" y="1458" width="432" height="20" fill="url(#pn)" /><path d="M107 1457H540" stroke="#000" stroke-width="2" />
          <text class="par" x="145" y="1446.500" textLength="60" lengthAdjust="spacingAndGlyphs">notes</text>
          <path d="M525 1486V1466Q526 1460 532 1460T539 1466V1486Z" fill="#4f9c98" />
          <text class="mono" x="156" y="1484" font-size="34.600" textLength="329" xml:space="preserve">e may need to do</text>
          <rect x="100" y="1444.500" width="59" height="40.500" fill="url(#bt)" stroke="#111" stroke-width="1.300" />
          <path d="M118.500 1456V1472C118.500 1478 139.500 1478 139.500 1472V1456" fill="url(#orh)" stroke="#8a3c00" stroke-width="1.200" /><ellipse cx="129" cy="1456" rx="10.500" ry="4.500" fill="#ffd040" stroke="#8a3c00" stroke-width="1.200" />
        </g>

        <!-- navigation compass -->
        <g>
          <circle cx="1154" cy="1441" r="31" fill="url(#dial)" stroke="#333" stroke-width="1.500" /><circle cx="1154" cy="1441" r="29" fill="none" stroke="#fff" stroke-width="3" />
          <path d="M1126 1458A33 33 0 0 1 1142 1411M1147 1410A32 32 0 0 1 1174 1416M1178 1420A33 33 0 0 1 1186 1449" fill="none" stroke="#000" stroke-width="4.500" />
          <path d="M1110 1424L1120 1421L1123 1430L1116 1433Z" />
          <path d="M1159 1413L1169 1416L1162 1423ZM1126 1435L1129 1426L1136 1432ZM1181 1450L1173 1448L1177 1457ZM1149 1469L1139 1467L1147 1460Z" fill="#fff" />
        </g>
      </svg>

      <footer class="ghstat">
        <svg width="24" height="24" viewBox="0 0 24 24"><circle cx="12" cy="12" r="11" fill="#1d5fc0" stroke="#0a2c90" stroke-width="2" /><circle cx="12" cy="12" r="7.500" fill="none" stroke="#5cb4f0" stroke-width="3" /><path d="M10 4H14L13.300 14H10.700Z" fill="#fff" stroke="#0a2c70" stroke-width=".8" /><circle cx="12" cy="18" r="2" fill="#fff" stroke="#0a2c70" stroke-width=".8" /></svg>
        <span v-fit="327" class="t">Autosave complete (260 seconds ago)</span>
        <span v-fit="73" class="t ver">1.0.0008</span>
        <svg class="sz" width="12" height="12" viewBox="0 0 12 12" fill="#999"><path d="M8 0h2v2H8zM8 4h2v2H8zM4 4h2v2H4zM8 8h2v2H8zM4 8h2v2H4zM0 8h2v2H0z" /></svg>
      </footer>
    </div>
  </div>
</template>

<style>
body { margin: 0; background: #000; overflow: hidden; }
</style>

<style scoped>
.desktop { position: relative; width: 2523px; height: 1536px; overflow: hidden; background: #000; font-family: "Open Sans", "Noto Sans", sans-serif; font-size: 18px; line-height: 24px; color: #333; }
.desktop * { box-sizing: border-box; }
.desktop svg { display: block; flex: none; overflow: visible; }
.defs { position: absolute; width: 0; height: 0; }
.t { display: block; white-space: nowrap; flex: none; }
i, em { display: block; flex: none; }

.rhino { margin-left: 10px; width: 2505px; height: 1528px; border: 2px solid #bfc6da; display: flex; flex-direction: column; background: #d8dadd; }
.title { height: 40px; background: #e9ebee; display: flex; align-items: center; padding-left: 11px; }
.appicon { width: 24px; height: 24px; margin-right: 6px; }
.winbtns { margin-left: 1831px; }
.rmenu { height: 33px; background: #e9ebee; display: flex; gap: 23px; padding: 3px 0 0 12px; }
.grip { width: 16px; background: #e9ebee; border-radius: 8px 0 0 8px; display: flex; flex-direction: column; align-items: center; gap: 4px; margin-right: 1px; flex: none; }
.grip i, .sidetop i { width: 5px; height: 5px; border: 1.3px solid #aaacb0; border-radius: 50%; }
.cmd { height: 81px; display: flex; padding: 0 3px; }
.cgrip { padding-top: 25px; }
.bgrip { padding-top: 24px; height: 80px; margin-top: 4px; }
.cmdbody { flex: 1; background: #fff; color: #111; min-width: 0; }
.hist { height: 53px; border-bottom: 2px solid #bfc8d8; overflow: hidden; display: flex; flex-direction: column; justify-content: flex-end; padding: 0 0 3px 2px; gap: 7px; }
.prompt { padding: 0 0 0 2px; }
.cmdscroll { width: 25px; background: #efefef; padding-top: 54px; }
.spin { height: 13px; margin: 0 1px; border: 1px solid #999; background: #f2f2f2; display: flex; align-items: center; justify-content: center; }
.su { border: 5px solid transparent; border-top: 0; border-bottom: 6px solid #000; }
.sd { border: 5px solid transparent; border-bottom: 0; border-top: 6px solid #000; }
.bars { height: 84px; display: flex; padding: 0 3px; }
.barcol { flex: 1; }
.strip { height: 32px; display: flex; color: #707276; }
.std { background: #e9ebee; padding: 2px 15px 0; margin-top: 4px; height: 28px; color: #555; border-radius: 6px 6px 0 0; display: flex; align-items: center; }
.more { display: flex; gap: 30px; margin-left: 1063px; align-items: center; padding-top: 6px; }
.cog { width: 18px; height: 18px; margin-left: auto; }
.strip .cog { margin: 8px 8px 0 auto; }
.btns { height: 52px; background: #e9ebee; display: flex; }
.cell { position: relative; width: 42px; height: 42px; display: flex; align-items: center; justify-content: center; }
.cell svg { width: 32px; height: 32px; }
.btns .cell svg { margin-right: 2px; }
.fly { position: absolute; right: 0; bottom: 0; border-bottom: 10px solid #77787a; border-left: 10px solid transparent; }
.gapcell { position: relative; width: 1091px; height: 42px; }

.work { height: 1251px; padding: 3px 3px 0; display: flex; }
.side { width: 1185px; background: #e9ebee; border-radius: 8px 0 0 0; margin-right: 6px; overflow: hidden; }
.sidetop { height: 16px; border-bottom: 2px solid #d3d5d9; display: flex; gap: 4px; padding: 5px 0 0 71px; }
.tools { display: grid; grid-template-columns: 42px 42px; width: 84px; grid-auto-rows: 42px; height: 609px; }
.oshead { height: 29px; background: #eceded; border-top: 2px solid #d3d5d9; border-bottom: 2px solid #d3d5d9; color: #77797d; padding: 0 0 0 7px; line-height: 23px; }
.ostabs { display: flex; height: 31px; }
.ostab { width: 53px; height: 30px; }
.ostab2 { flex: 1; background: #d3d4d8; border-radius: 0 0 0 8px; height: 30px; padding: 4px 0 0 17px; }
.snaps { padding-top: 6px; }
.snaps label { height: 26px; display: flex; align-items: center; gap: 8px; padding-left: 5px; color: #3c3c3c; }
.snaps label.last { margin-top: 26px; }
.snaps i { width: 22px; height: 21px; border: 2px solid #bfc6da; background: #fff; }

.views { width: 998px; margin-right: 6px; display: flex; flex-direction: column; gap: 5px; padding-top: 3px; }
.view { position: relative; height: 604px; background: #9da3ab; box-shadow: 0 0 0 1.500px #b8bfd0; overflow: hidden; }
.right { height: 603px; }
.scene { position: absolute; inset: 0; width: 998px; height: 100%; }
.ln { fill: none; vector-effect: non-scaling-stroke; }
.axis text { font: 20px "Open Sans", sans-serif; fill: #606062; }
.vlabel { position: absolute; left: 1px; top: 1px; height: 24px; background: #d9dbde; color: #333; display: flex; align-items: center; padding-left: 9px; width: 84px; }
.vlabel.on { background: #6aa0fb; width: 140px; color: #223; top: 0; }
.vlabel i { width: 1.500px; height: 24px; background: #444; margin: 0 3px 0 9px; }
.vlabel em { border: 5.500px solid transparent; border-top: 7px solid #222; border-bottom: 0; }

.panel { width: 300px; }
.phead { height: 29px; background: #e9ebee; border-radius: 8px 8px 0 0; border-bottom: 2px solid #d3d5d9; display: flex; align-items: center; padding: 0 7px 2px; color: #707276; }
.prow { display: flex; height: 1219px; }
.pbody { width: 270px; background: #e9ebee; }
.ptools { display: grid; grid-template-columns: repeat(8, 33px); grid-auto-rows: 33px; height: 82px; padding-top: 9px; margin-left: -1px; justify-items: center; align-items: center; }
.ptools svg { width: 22px; height: 22px; }
.search { width: 264px; height: 35px; border: 2px solid #bcc6dc; border-radius: 18px; background: #fff; display: flex; align-items: center; padding: 0 0 1px 6px; gap: 2px; color: #76787c; }
.table { margin-top: 8px; width: 264px; height: 1094px; background: #fff; border-top: 1px solid #dfe3ec; position: relative; }
.thead { height: 35px; display: flex; border-bottom: 2px solid #dfe3ec; overflow: hidden; color: #333; align-items: stretch; }
.thead > span { width: 30px; border-right: 1.500px solid #dfe3ec; flex: none; }
.thead > .first { width: 120px; padding: 4px 0 0 8px; }
.thead > .m { border: 0; padding: 4px 0 0 9px; }
.tr { height: 30px; border-bottom: 1.500px dotted #ccd; display: flex; align-items: center; overflow: hidden; padding: 0 0 2px 26px; color: #222; }
.tr svg { margin-left: 33px; }
.sw { width: 21px; height: 22px; background: #000; margin-left: 69px; }
.ring { width: 20px; height: 20px; border: 1.500px solid #777; border-radius: 50%; margin-left: 7px; }
.thumb { position: absolute; left: 11px; bottom: 7px; width: 69px; height: 12px; border-radius: 6px; background: #c4c4c4; }
.ptabs { width: 30px; background: #e9ebee; }
.ptab { height: 55px; background: #e9ebee; display: flex; justify-content: center; padding-top: 17px; border-radius: 0 0 8px 0; }
.ptab svg { width: 22px; height: 22px; }
.prest { background: #d8dadd; border-radius: 8px 0 0 0; height: 1164px; display: flex; flex-direction: column; align-items: center; padding-top: 16px; gap: 32px; }
.prest svg { width: 22px; height: 22px; }

.rstat { height: 32px; background: #e9ebee; display: flex; align-items: center; color: #4a4a4a; }
.dock { width: 22px; height: 21px; border: 3px solid #4a4c4e; background: #fff; }
.dock.l { margin-left: 10px; border-left-width: 9px; }
.dock.r { margin-left: 138px; border-right-width: 9px; }
.cpl { margin-left: 31px; }
.planar { margin-left: 1066px; }
.st.on { background: #cfd7ee; border-radius: 4px; padding: 0 11px; height: 28px; font-weight: 700; color: #2a2a2e; display: flex; align-items: center; }

.taskbar { height: 8px; border-top: 2px solid #b0b0b0; background: #dadada; overflow: hidden; }
.taskbar i { width: 55px; height: 6px; margin: 4px 0 0 1345px; background: #ecaaa6; border-radius: 4px 4px 0 0; }
.edge { position: absolute; top: 0; width: 10px; height: 1526px; overflow: hidden; color: #fff; }
.edge span { position: absolute; font-size: 17px; left: 2px; }
.rightedge { right: 0; width: 8px; }
.rightedge span { left: -4px; }
.edge span:nth-child(1) { top: 84px; }
.edge.left span:nth-child(2) { top: 1145px; left: 6px; }
.edge.left span:nth-child(3) { top: 1269px; left: -1px; }
.edge.left span:nth-child(4) { top: 1416px; left: 5px; }
.rightedge span:nth-child(2) { top: 232px; }
.rightedge span:nth-child(3) { top: 404px; }
.rightedge span:nth-child(4) { top: 1417px; }

.gh { position: absolute; left: 106px; top: 26px; width: 1095px; height: 1493px; border: 1px solid #9c9c9e; border-radius: 13px; background: #f0f0f0; overflow: hidden; box-shadow: 0 10px 34px rgba(0, 0, 0, .38), 0 0 4px rgba(0, 0, 0, .3); display: flex; flex-direction: column; }
.ghtitle { height: 43px; background: #f3f3f3; display: flex; align-items: center; justify-content: space-between; padding: 0 25px 3px 11px; color: #8c8c8c; }
.ghmenu { height: 44px; background: linear-gradient(90deg, #f3f3f3, #fbfbfb); display: flex; gap: 26px; align-items: center; padding: 0 14px 0 18px; color: #000; }
.ghmenu .doc { margin-left: auto; }
.ghtabs { height: 34px; background: #efefef; display: flex; gap: 26px; align-items: center; padding-left: 12px; color: #707070; }
.gt.on { height: 35px; margin: 1px -14px 0 -12px; padding: 3px 14px 0 13px; background: #fff; border: 1px solid #8a8a8a; border-bottom: 0; border-radius: 9px 9px 0 0; color: #000; width: 91px; position: relative; z-index: 1; }
.ribbon { height: 260px; background: linear-gradient(#d8d8d8, #f5f5f5); border-top: 1px solid #909090; border-radius: 8px 10px 0 0; display: flex; gap: 5px; padding: 2px 0 0 3px; }
.grp { height: 108px; border: 1px solid #777; border-radius: 7px; background: linear-gradient(#d6d6d6, #e2e2e2 60%, #dcdcdc); box-shadow: inset 0 1px #fff; overflow: hidden; }
.gi { display: grid; grid-auto-rows: 42px; justify-content: center; padding-top: 2px; height: 87px; }
.gi span { display: flex; align-items: center; justify-content: center; }
.gi .div { background: linear-gradient(90deg, #b0b0b0 1px, #f2f2f2 1px, #f2f2f2 2px, transparent 2px); }
.gi svg { width: 28px; height: 28px; margin-right: 2px; filter: drop-shadow(1px 1px 1px rgba(0, 0, 0, .3)); }
.gl { height: 20px; background: linear-gradient(#303030, #151515); color: #fff; font-size: 15.500px; line-height: 18px; display: flex; justify-content: center; position: relative; padding-right: 16px; }
.gl svg { position: absolute; right: 3px; top: 4px; }
.ghbar { height: 46px; border-top: 1px solid #777; background: linear-gradient(#fff, #f0f0f0); display: flex; align-items: center; padding: 0 4px 1px 5px; margin-right: 2px; }
.g1 { width: 29px; height: 33px; }
.g2 { width: 33px; height: 33px; margin-left: 12px; }
.vsep { width: 1px; height: 34px; background: #bbb; margin-left: 9px; }
.combo { width: 244px; height: 32px; border: 1px solid #777; border-radius: 2px; margin: 0 9px 0 4px; background: #fff; display: flex; align-items: center; justify-content: space-between; padding: 0 4px 0 2px; color: #000; font-size: 18.500px; }
.g3 { width: 32px; height: 32px; }
.dd { border: 4px solid transparent; border-top: 5px solid #111; border-bottom: 0; margin-left: 10px; }
.eye { margin-left: 9px; }
.pen { margin-left: 8px; }
.grow { flex: 1; }
.r1 { width: 28px; height: 32px; margin-right: 11px; }
.r2 { width: 33px; height: 33px; margin-right: 5px; }
.sel { width: 40px; height: 42px; border: 1.500px solid #0a78d6; display: flex; align-items: center; justify-content: center; }
.sel svg { width: 33px; height: 33px; }
.s2 { margin: 0 17px 0 8px; }
.r3 { width: 27px; height: 32px; margin-right: 7px; }
.r4 { width: 33px; height: 32px; margin-right: 7px; }
.s3 { margin: 0 6px 0 2px; }
.r5 { width: 30px; height: 30px; }
.r5 + .dd { margin: 0 -1px 0 6px; }
.canvas { width: 1091px; height: 1032px; overflow: hidden !important; }
.port { font: 23px "Open Sans", sans-serif; fill: #111; }
.par { font: 21.500px "Open Sans", sans-serif; fill: #000; }
.cap { font-family: "Open Sans", sans-serif; font-weight: 700; fill: #fff; }
.mono { font-family: "Liberation Mono", monospace; font-weight: 700; fill: #000; }
.pin { fill: #fff; stroke: #000; stroke-width: 4; }
.ghstat { height: 32px; display: flex; align-items: center; border-top: 2px solid #fff; padding: 1px 2px 0 6px; color: #000; }
.ghstat .t { margin-left: 3px; }
.ghstat .ver { margin-left: auto; margin-right: 45px; color: #777; }
</style>
